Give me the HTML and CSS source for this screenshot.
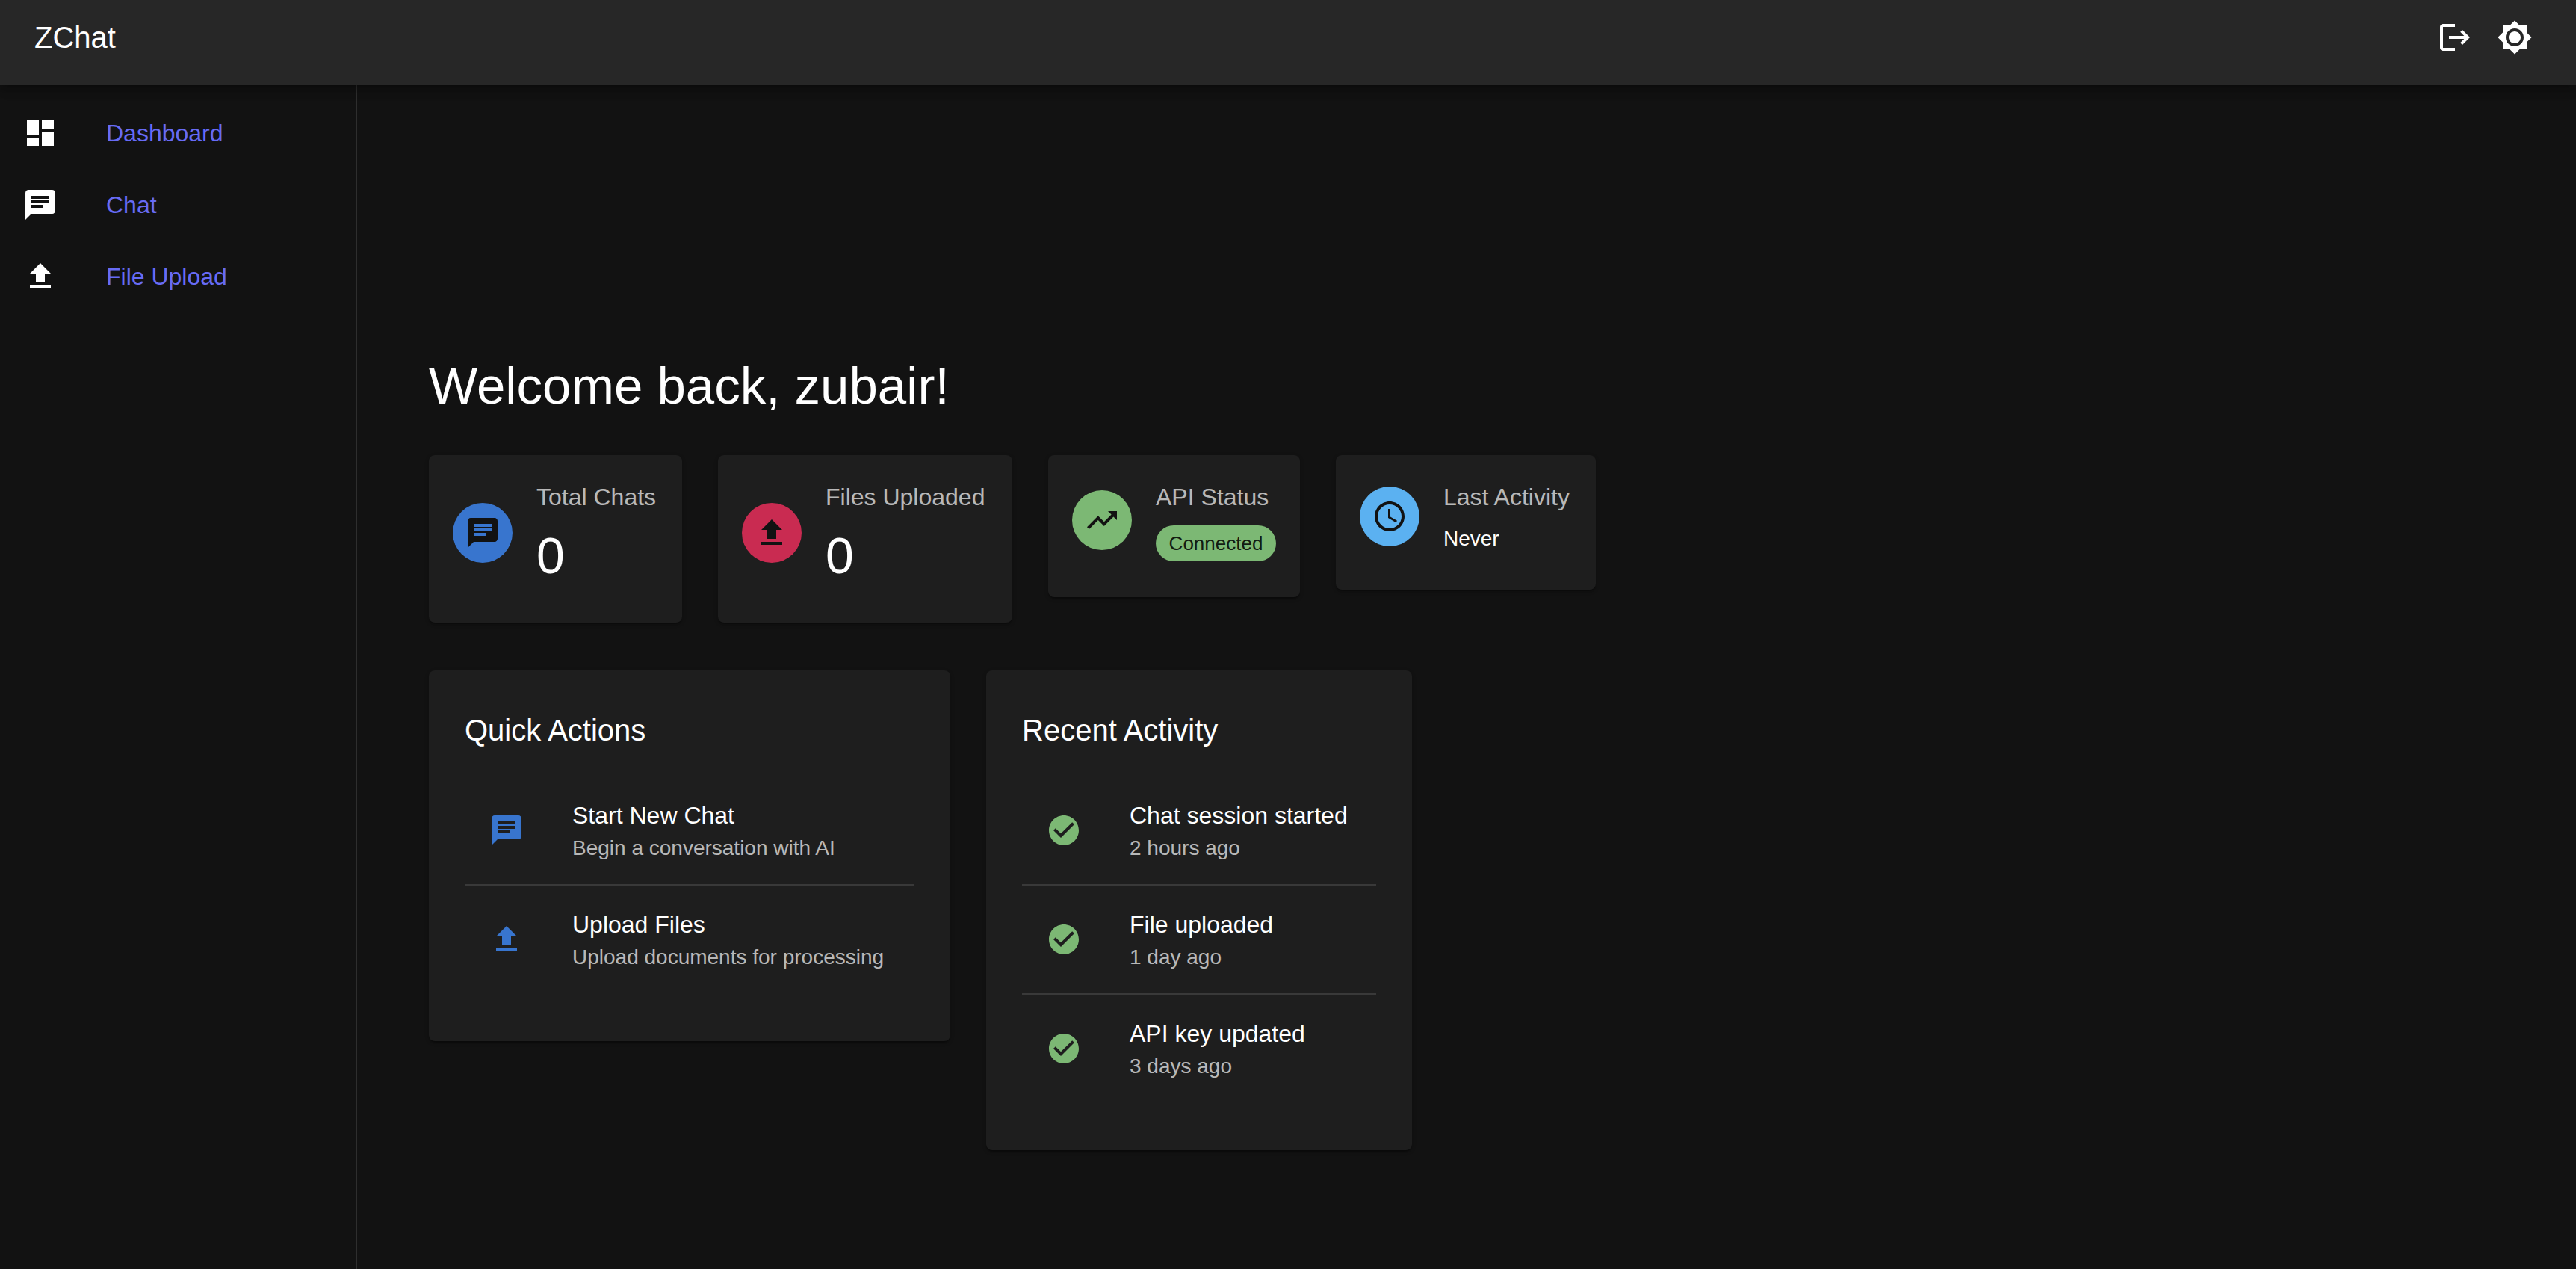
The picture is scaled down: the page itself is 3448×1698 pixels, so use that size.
FILE: index.html
```html
<!DOCTYPE html>
<html lang="en">
<head>
<meta charset="utf-8">
<title>ZChat</title>
<link rel="stylesheet" href="styles.css">
</head>
<body>
<svg class="sprite" aria-hidden="true">
  <symbol id="dashboard" viewBox="0 0 24 24"><path d="M3 13h8V3H3v10zm0 8h8v-6H3v6zm10 0h8V11h-8v10zm0-18v6h8V3h-8z"/></symbol>
  <symbol id="chat" viewBox="0 0 24 24"><path d="M20 2H4c-1.100 0-1.990.9-1.990 2L2 22l4-4h14c1.100 0 2-.9 2-2V4c0-1.100-.9-2-2-2zM6 9h12v2H6V9zm8 5H6v-2h8v2zm4-6H6V6h12v2z"/></symbol>
  <symbol id="upload" viewBox="0 0 24 24"><path d="M5 20h14v-2H5v2zm0-10h4v6h6v-6h4l-7-7-7 7z"/></symbol>
  <symbol id="logout" viewBox="0 0 24 24"><path d="m17 7-1.410 1.410L18.170 11H8v2h10.170l-2.580 2.580L17 17l5-5zM4 5h8V3H4c-1.100 0-2 .9-2 2v14c0 1.100.9 2 2 2h8v-2H4V5z"/></symbol>
  <symbol id="brightness" viewBox="0 0 24 24"><path d="M20 8.690V4h-4.690L12 .690 8.690 4H4v4.690L.690 12 4 15.310V20h4.690L12 23.310 15.310 20H20v-4.690L23.310 12 20 8.690zM12 18c-3.310 0-6-2.690-6-6s2.690-6 6-6 6 2.690 6 6-2.690 6-6 6zm0-10c-2.210 0-4 1.790-4 4s1.790 4 4 4 4-1.790 4-4-1.790-4-4-4z"/></symbol>
  <symbol id="trending" viewBox="0 0 24 24"><path d="m16 6 2.290 2.290-4.880 4.880-4-4L2 16.590 3.410 18l6-6 4 4 6.300-6.290L22 12V6z"/></symbol>
  <symbol id="clock" viewBox="0 0 24 24"><path d="M11.990 2C6.470 2 2 6.480 2 12s4.470 10 9.990 10C17.520 22 22 17.520 22 12S17.520 2 11.990 2zM12 20c-4.420 0-8-3.580-8-8s3.580-8 8-8 8 3.580 8 8-3.580 8-8 8zm.5-13H11v6l5.250 3.150.75-1.230-4.500-2.670z"/></symbol>
  <symbol id="check" viewBox="0 0 24 24"><path d="M12 2C6.480 2 2 6.480 2 12s4.480 10 10 10 10-4.480 10-10S17.520 2 12 2zm-2 15-5-5 1.410-1.410L10 14.170l7.590-7.590L19 8l-9 9z"/></symbol>
</svg>

<header class="appbar">
  <div class="brand">ZChat</div>
  <button class="icon-button" type="button" aria-label="Log out"><svg class="icon"><use href="#logout"/></svg></button>
  <button class="icon-button" type="button" aria-label="Toggle theme"><svg class="icon"><use href="#brightness"/></svg></button>
</header>

<div class="layout">
  <nav class="sidebar">
    <a class="nav-link" href="#"><svg class="icon"><use href="#dashboard"/></svg><span>Dashboard</span></a>
    <a class="nav-link" href="#"><svg class="icon"><use href="#chat"/></svg><span>Chat</span></a>
    <a class="nav-link" href="#"><svg class="icon"><use href="#upload"/></svg><span>File Upload</span></a>
  </nav>

  <main class="content">
    <h1 class="welcome">Welcome back, zubair!</h1>

    <section class="stats">
      <article class="card stat">
        <div class="avatar blue"><svg class="icon"><use href="#chat"/></svg></div>
        <div><p class="stat-label">Total Chats</p><p class="stat-value">0</p></div>
      </article>
      <article class="card stat">
        <div class="avatar red"><svg class="icon"><use href="#upload"/></svg></div>
        <div><p class="stat-label">Files Uploaded</p><p class="stat-value">0</p></div>
      </article>
      <article class="card stat">
        <div class="avatar green"><svg class="icon"><use href="#trending"/></svg></div>
        <div><p class="stat-label">API Status</p><p class="chip">Connected</p></div>
      </article>
      <article class="card stat">
        <div class="avatar sky"><svg class="icon"><use href="#clock"/></svg></div>
        <div><p class="stat-label">Last Activity</p><p class="stat-note">Never</p></div>
      </article>
    </section>

    <section class="panels">
      <article class="card panel">
        <h2 class="panel-title">Quick Actions</h2>
        <ul class="list">
          <li class="item"><svg class="icon action"><use href="#chat"/></svg><div><p class="primary">Start New Chat</p><p class="secondary">Begin a conversation with AI</p></div></li>
          <li class="item"><svg class="icon action"><use href="#upload"/></svg><div><p class="primary">Upload Files</p><p class="secondary">Upload documents for processing</p></div></li>
        </ul>
      </article>
      <article class="card panel">
        <h2 class="panel-title">Recent Activity</h2>
        <ul class="list">
          <li class="item"><svg class="icon done"><use href="#check"/></svg><div><p class="primary">Chat session started</p><p class="secondary">2 hours ago</p></div></li>
          <li class="item"><svg class="icon done"><use href="#check"/></svg><div><p class="primary">File uploaded</p><p class="secondary">1 day ago</p></div></li>
          <li class="item"><svg class="icon done"><use href="#check"/></svg><div><p class="primary">API key updated</p><p class="secondary">3 days ago</p></div></li>
        </ul>
      </article>
    </section>
  </main>
</div>
</body>
</html>
```
FILE: styles.css
```css
:root {
  --blue: #3875ce;
  --red: #c92b51;
  --green: #7cb874;
  --sky: #5bb1f1;
  --muted: rgba(255, 255, 255, 0.7);
}

* { box-sizing: border-box; }

body {
  margin: 0;
  min-height: 100vh;
  display: flex;
  flex-direction: column;
  background: #121212;
  color: #fff;
  font-family: Helvetica, "Liberation Sans", Arial, sans-serif;
  font-size: 32px;
  line-height: 48px;
}

h1, h2, p, ul { margin: 0; padding: 0; font-weight: 400; }

.sprite { display: none; }

.icon {
  display: block;
  flex: none;
  width: 48px;
  height: 48px;
  fill: currentColor;
}

.appbar {
  position: relative;
  display: flex;
  align-items: center;
  padding: 10px 42px 24px 46px;
  background: #272727;
  box-shadow: 0 4px 8px -2px rgba(0, 0, 0, 0.2), 0 8px 10px rgba(0, 0, 0, 0.14), 0 2px 20px rgba(0, 0, 0, 0.12);
}

.brand { flex: 1; font-size: 40px; line-height: 64px; }

.icon-button {
  padding: 16px;
  border: 0;
  border-radius: 50%;
  background: none;
  color: inherit;
  cursor: pointer;
}

.layout { flex: 1; display: flex; }

.sidebar {
  flex: none;
  width: 478px;
  padding-top: 16px;
  border-right: 2px solid #2e2e2e;
}

.nav-link {
  display: flex;
  align-items: center;
  gap: 64px;
  padding: 24px 30px;
  color: #fff;
  text-decoration: none;
}

.nav-link span { color: #676bf5; }

.content { flex: 1; min-width: 0; padding: 361px 96px 96px; }

.welcome { margin-bottom: 50px; font-size: 69px; line-height: 84px; }

.card {
  border-radius: 8px;
  background: #1e1e1e;
  box-shadow: 0 4px 2px -2px rgba(0, 0, 0, 0.2), 0 2px 2px rgba(0, 0, 0, 0.14), 0 2px 6px rgba(0, 0, 0, 0.12);
}

.stats {
  display: grid;
  grid-template-columns:
    minmax(339px, max-content) minmax(394px, max-content)
    minmax(337px, max-content) minmax(348px, max-content);
  align-items: start;
  gap: 48px;
  margin-bottom: 64px;
}

.stat {
  display: flex;
  align-items: center;
  gap: 32px;
  padding: 32px 0 48px 32px;
}

.avatar {
  display: grid;
  place-items: center;
  flex: none;
  width: 80px;
  height: 80px;
  border-radius: 50%;
  color: #121212;
}

.blue { background: var(--blue); }
.red { background: var(--red); }
.green { background: var(--green); }
.sky { background: var(--sky); }

.stat-label { margin-bottom: 12px; color: var(--muted); white-space: nowrap; }
.stat-value { font-size: 68px; line-height: 84px; }
.stat-note { font-size: 28px; line-height: 40px; }

.chip {
  width: 161px;
  margin-top: 14px;
  border-radius: 24px;
  background: var(--green);
  color: rgba(0, 0, 0, 0.87);
  font-size: 26px;
  text-align: center;
}

.panels {
  display: grid;
  grid-template-columns: minmax(698px, max-content) minmax(570px, max-content);
  align-items: start;
  gap: 48px;
}

.panel { padding: 48px; }
.panel-title { margin-bottom: 14px; font-size: 40px; line-height: 64px; }

.list { padding: 16px 0; list-style: none; }

.item {
  display: flex;
  align-items: center;
  gap: 64px;
  padding: 28px 32px;
}

.item + .item { border-top: 2px solid #393939; }

.action { color: var(--blue); }
.done { color: var(--green); }
.secondary { color: var(--muted); font-size: 28px; line-height: 40px; }
```
